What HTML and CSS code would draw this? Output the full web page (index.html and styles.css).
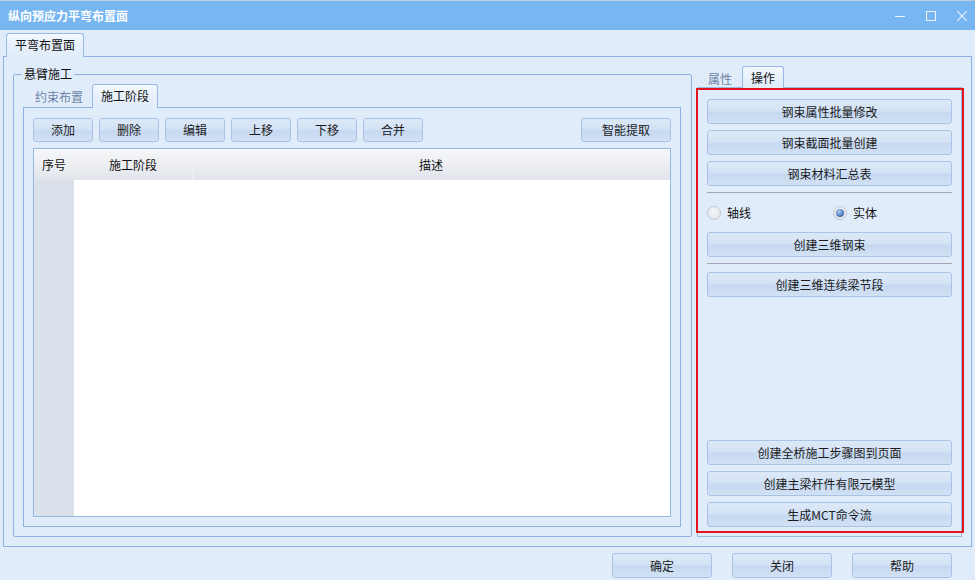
FILE: index.html
```html
<!DOCTYPE html>
<html>
<head>
<meta charset="utf-8">
<title>纵向预应力平弯布置面</title>
<link rel="stylesheet" href="styles.css">
</head>
<body>
<div class="window">
  <div class="titlebar">
    <span class="title">纵向预应力平弯布置面</span>
    <div class="controls">
      <svg class="ctl" width="10" height="10" viewBox="0 0 10 10"><path d="M0 5.5H10" stroke="#eef5fd" stroke-width="1"/></svg>
      <svg class="ctl" width="10" height="10" viewBox="0 0 10 10"><rect x="0.5" y="0.5" width="9" height="9" fill="none" stroke="#eef5fd" stroke-width="1"/></svg>
      <svg class="ctl" width="10" height="10" viewBox="0 0 10 10"><path d="M0 0L10 10M10 0L0 10" stroke="#eef5fd" stroke-width="1.1"/></svg>
    </div>
  </div>

  <div class="outer-tabs">
    <div class="tab tab-active outer-tab">平弯布置面</div>
  </div>

  <div class="outer-page">
    <div class="groupbox">
      <span class="legend">悬臂施工</span>
      <div class="inner-tabs">
        <div class="tab tab-inactive inner-tab-a">约束布置</div>
        <div class="tab tab-active inner-tab-b">施工阶段</div>
      </div>
      <div class="inner-page">
        <div class="toolbar">
          <button class="btn tool">添加</button>
          <button class="btn tool">删除</button>
          <button class="btn tool">编辑</button>
          <button class="btn tool">上移</button>
          <button class="btn tool">下移</button>
          <button class="btn tool">合并</button>
          <button class="btn tool-wide">智能提取</button>
        </div>
        <div class="grid">
          <div class="grid-head">
            <div class="col col-no">序号</div>
            <div class="col col-stage">施工阶段</div>
            <div class="col col-desc">描述</div>
          </div>
          <div class="grid-body">
            <div class="rowhead"></div>
          </div>
        </div>
      </div>
    </div>

    <div class="side">
      <div class="side-tabs">
        <div class="tab tab-inactive side-tab-a">属性</div>
        <div class="tab tab-active side-tab-b">操作</div>
      </div>
      <div class="side-page">
        <div class="highlight"></div>
        <button class="btn side-btn">钢束属性批量修改</button>
        <button class="btn side-btn gap6">钢束截面批量创建</button>
        <button class="btn side-btn gap6">钢束材料汇总表</button>
        <div class="sep gap6"></div>
        <div class="radios">
          <label class="radio"><span class="dot"></span>轴线</label>
          <label class="radio"><span class="dot dot-on"></span>实体</label>
        </div>
        <button class="btn side-btn">创建三维钢束</button>
        <div class="sep gap6"></div>
        <button class="btn side-btn gap8">创建三维连续梁节段</button>
        <div class="spacer"></div>
        <button class="btn side-btn">创建全桥施工步骤图到页面</button>
        <button class="btn side-btn gap6">创建主梁杆件有限元模型</button>
        <button class="btn side-btn gap6">生成MCT命令流</button>
      </div>
    </div>
  </div>

  <div class="footer">
    <button class="btn foot-btn">确定</button>
    <button class="btn foot-btn">关闭</button>
    <button class="btn foot-btn">帮助</button>
  </div>
</div>
</body>
</html>
```

FILE: styles.css
```css
* { box-sizing: border-box; }

html, body {
  margin: 0;
  padding: 0;
}

body {
  width: 975px;
  height: 580px;
  overflow: hidden;
  background: #e1ecfa;
  font-family: "Noto Sans CJK SC", "Microsoft YaHei", "Noto Sans", sans-serif;
  font-size: 12px;
  color: #1b1b1b;
}

.window {
  width: 975px;
  height: 580px;
  display: flex;
  flex-direction: column;
}

/* title bar */
.titlebar {
  height: 30px;
  flex: none;
  background: #78b6f2;
  border-top: 1px solid #b9cde3;
  display: flex;
  align-items: center;
  padding-left: 8px;
}

.title {
  color: #ffffff;
  font-weight: bold;
  font-size: 12px;
  line-height: 16px;
}

.controls {
  margin-left: auto;
  display: flex;
  align-items: center;
  gap: 21px;
  padding-right: 8px;
}

.ctl { display: block; }

/* tabs */
.tab {
  height: 23px;
  line-height: 21px;
  white-space: nowrap;
}

.tab-active {
  position: relative;
  z-index: 1;
  background: linear-gradient(to bottom, #f3f8fe 0%, #e7f0fb 50%, #e1ecfa 100%);
  border: 1px solid #98b9e6;
  border-bottom: none;
  border-radius: 3px 3px 0 0;
  margin-bottom: -1px;
  height: 24px;
  color: #111;
}

.tab-inactive {
  color: #6c84a6;
  padding-top: 2px;
}

.outer-tabs {
  height: 26px;
  flex: none;
  padding: 3px 0 0 6px;
  display: flex;
}

.outer-tab {
  width: 78px;
  padding-left: 8px;
}

.outer-page {
  height: 491px;
  flex: none;
  margin: 0 3px;
  border: 1px solid #8db3e6;
  display: flex;
  align-items: flex-start;
  padding: 9px 8px 9px 9px;
  gap: 5px;
}

/* group box */
.groupbox {
  position: relative;
  width: 679px;
  height: 463px;
  margin-top: 8px;
  border: 1px solid #8db3e6;
  border-radius: 2px;
  padding: 9px 10px 9px 9px;
  display: flex;
  flex-direction: column;
}

.legend {
  position: absolute;
  top: -9px;
  left: 8px;
  padding: 0 2px;
  background: #e1ecfa;
  line-height: 16px;
  font-size: 12px;
  color: #111;
}

.inner-tabs {
  height: 23px;
  flex: none;
  display: flex;
}

.inner-tab-a {
  width: 66px;
  padding-left: 12px;
}

.inner-tab-b {
  width: 66px;
  padding-left: 8px;
  margin-left: 3px;
}

.inner-page {
  height: 420px;
  flex: none;
  border: 1px solid #8db3e6;
  padding: 10px 9px 9px 9px;
  display: flex;
  flex-direction: column;
}

.toolbar {
  height: 24px;
  flex: none;
  display: flex;
  gap: 6px;
}

/* buttons */
.btn {
  font-family: inherit;
  font-size: 12px;
  color: #1b1b1b;
  border: 1px solid #a9c3e6;
  border-radius: 3px;
  background: linear-gradient(to bottom, #dde9f8 0%, #d3e2f5 45%, #c6d9f1 55%, #d2e1f4 100%);
  padding: 0;
  margin: 0;
  text-align: center;
  line-height: 20px;
  flex: none;
}

.tool {
  width: 60px;
  height: 24px;
}

.tool-wide {
  width: 90px;
  height: 24px;
  margin-left: auto;
}

/* grid */
.grid {
  margin-top: 6px;
  height: 369px;
  flex: none;
  border: 1px solid #97b8e6;
  background: #ffffff;
  display: flex;
  flex-direction: column;
}

.grid-head {
  height: 31px;
  flex: none;
  display: flex;
  background: linear-gradient(to bottom, #f5f6f8 0%, #eceef2 50%, #e1e5eb 100%);
}

.col {
  line-height: 31px;
  text-align: center;
  color: #111;
}

.col-no { width: 40px; }

.col-stage {
  width: 119px;
  border-right: 1px solid #eef0f4;
}

.col-desc { flex: 1; padding-right: 1px; }

.grid-body {
  flex: 1;
  display: flex;
}

.rowhead {
  width: 40px;
  background: #dae1ea;
}

/* side panel */
.side {
  width: 265px;
  height: 471px;
  display: flex;
  flex-direction: column;
}

.side-tabs {
  height: 21px;
  flex: none;
  display: flex;
}

.side-tabs .tab {
  height: 21px;
  line-height: 21px;
}

.side-tabs .tab-active {
  height: 22px;
}

.side-tab-a {
  width: 45px;
  padding-left: 11px;
}

.side-tab-b {
  width: 42px;
  padding-left: 8px;
}

.side-page {
  position: relative;
  height: 450px;
  flex: none;
  border: 1px solid #98b9e6;
  padding: 11px 9px 9px 9px;
  display: flex;
  flex-direction: column;
}

.highlight {
  position: absolute;
  left: -2px;
  top: 0;
  width: 268px;
  height: 445px;
  border: 2px solid #e3141e;
  pointer-events: none;
}

.side-btn {
  width: 245px;
  height: 25px;
}

.gap6 { margin-top: 6px; }
.gap8 { margin-top: 8px; }

.sep {
  height: 1px;
  flex: none;
  background: #a3a9b2;
}

.radios {
  height: 39px;
  flex: none;
  display: grid;
  grid-template-columns: 126px 1fr;
  align-items: center;
}

.radio {
  display: flex;
  align-items: center;
  gap: 6px;
  color: #111;
}

.dot {
  width: 14px;
  height: 14px;
  border-radius: 50%;
  border: 1px solid #c4cad3;
  background: radial-gradient(circle at 50% 40%, #f6f7f9 0%, #e3e6ea 70%, #d3d7dd 100%);
  display: flex;
  align-items: center;
  justify-content: center;
}

.dot-on::after {
  content: "";
  width: 8px;
  height: 8px;
  border-radius: 50%;
  background: radial-gradient(circle at 40% 35%, #b4cff0 0%, #4f7fc0 55%, #264f88 100%);
}

.spacer { flex: 1; }

/* footer */
.footer {
  flex: none;
  display: flex;
  justify-content: flex-end;
  gap: 20px;
  padding: 6px 23px 0 0;
}

.foot-btn {
  width: 100px;
  height: 25px;
}
```
